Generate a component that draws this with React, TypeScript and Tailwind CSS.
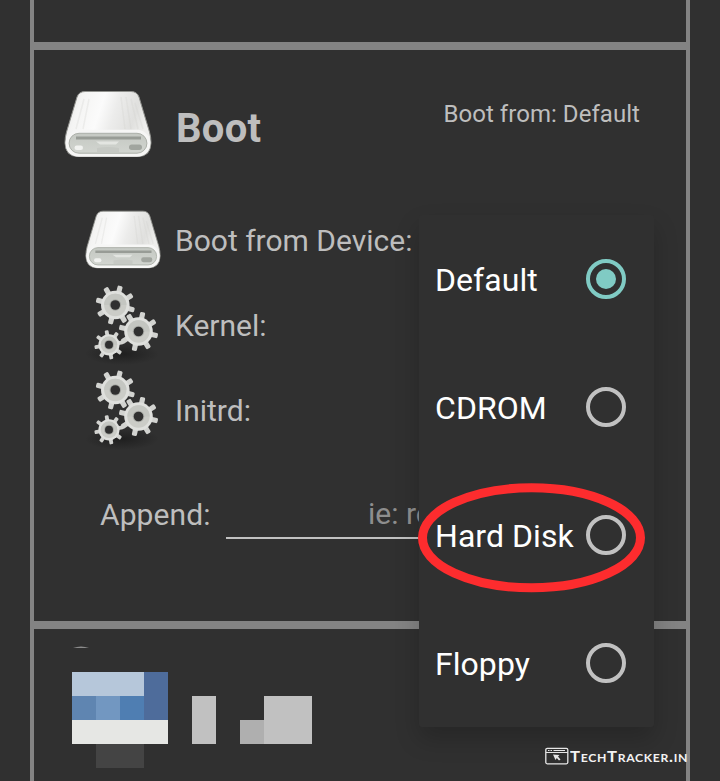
import React from 'react';

function Disk({ className, id }: { className: string; id: string }) {
  return (
    <svg className={className} viewBox="0 0 88 70" preserveAspectRatio="none">
      <defs>
        <linearGradient id={id + 'top'} x1="0" x2="1" y1="0" y2="0.25">
          <stop offset="0" stopColor="#dcdcda" />
          <stop offset="0.2" stopColor="#f4f4f3" />
          <stop offset="0.45" stopColor="#fbfbfb" />
          <stop offset="0.62" stopColor="#ececeb" />
          <stop offset="0.85" stopColor="#e0e0de" />
          <stop offset="1" stopColor="#eeeeec" />
        </linearGradient>
        <linearGradient id={id + 'front'} x1="0" x2="0" y1="0" y2="1">
          <stop offset="0" stopColor="#c3c7c1" />
          <stop offset="1" stopColor="#d3d6d1" />
        </linearGradient>
      </defs>
      <path
        d="M21 2.500H67Q73 2.500 75 8L85.500 43Q87 48 87 54Q86.500 67.500 74 67.500H14Q1.500 67.500 1 54Q1 48 2.500 43L13 8Q15 2.500 21 2.500Z"
        fill={`url(#${id}top)`}
        stroke="#90918d"
        strokeWidth="1"
      />
      <path d="M20 10L12 40M25 10L19 40M57 8L61 40M62 8L67 40M67 10L74 40M71 14L79 40" stroke="#cfcfcc" strokeWidth="1.500" opacity=".28" fill="none" />
      <rect x="3.300" y="42.500" width="81.400" height="23.500" rx="11.700" fill={`url(#${id}front)`} stroke="#f6f6f5" strokeWidth="3.400" />
      <rect x="5.100" y="44.300" width="77.800" height="19.900" rx="9.900" fill="none" stroke="#acb0a9" strokeWidth="1" />
      <path d="M12 49H77" stroke="#989c96" strokeWidth="3" />
      <path d="M32 52.500H55L52 55.500H36Z" fill="#e3e5e1" />
      <path d="M33 59Q44 57 55 59V63H33Z" fill="#c6c9c4" />
      <rect x="10.500" y="56.500" width="8.500" height="4.500" rx="2.200" fill="#f1f2f0" />
      <rect x="65" y="55.500" width="13" height="5.500" rx="2.700" fill="#a1a59f" />
    </svg>
  );
}

function Gear({ x, y, r, hole, turn }: { x: number; y: number; r: number; hole: number; turn: number }) {
  const teeth = [0, 45, 90, 135, 180, 225, 270, 315];
  const w = r * 0.36;
  return (
    <g transform={`translate(${x} ${y})`}>
      {teeth.map((a) => (
        <rect key={a} x={-w / 2} y={-r * 1.38} width={w} height={r * 0.6} rx={w * 0.28} transform={`rotate(${a + turn})`} fill="#d2d3d0" />
      ))}
      <circle r={r} fill="#dfe0dd" />
      <circle r={r * 0.78} fill="#cbccc7" />
      <path d={`M${-r * 0.78} 0A${r * 0.78} ${r * 0.78} 0 0 1 ${r * 0.78} 0`} fill="#c4c6c1" />
      <circle r={hole + 1} fill="#a9aba6" />
      <circle r={hole} fill="#303030" />
    </g>
  );
}

function Gears({ id }: { id: string }) {
  return (
    <svg className="h-[85px] w-[76px]" viewBox="85 283 76 85">
      <defs>
        <radialGradient id={id}>
          <stop offset="0" stopColor="#181818" stopOpacity=".7" />
          <stop offset="1" stopColor="#181818" stopOpacity="0" />
        </radialGradient>
      </defs>
      <ellipse cx="122" cy="354" rx="37" ry="11" fill={`url(#${id})`} />
      <Gear x={115.3} y={305} r={14.3} hole={4.8} turn={15} />
      <Gear x={109} y={344.8} r={10.6} hole={4} turn={-10} />
      <Gear x={138.500} y={331.500} r={14.3} hole={4.8} turn={13} />
    </svg>
  );
}

function Row({ icon, label }: { icon: React.ReactNode; label: string }) {
  return (
    <div className="flex h-[85px] items-center">
      <div className="flex h-full w-[90px] shrink-0 items-center">{icon}</div>
      <span className="text-[30px]">{label}</span>
    </div>
  );
}

const options = ['Default', 'CDROM', 'Hard Disk', 'Floppy'];

function Radio({ on }: { on: boolean }) {
  return (
    <span className={`flex size-10 items-center justify-center rounded-full border-4 ${on ? 'border-[#80cbc4]' : 'border-[#c1c1c1]'}`}>
      {on && <span className="size-5 rounded-full bg-[#80cbc4]" />}
    </span>
  );
}

function Menu() {
  return (
    <div className="absolute left-[419px] top-[215px] w-[235px] rounded-[3px] bg-[#303030] pl-4 pr-7 text-[32px] text-white shadow-[0_12px_24px_rgba(0,0,0,0.2)]">
      {options.map((o, i) => (
        <div key={o} className="flex h-32 items-center justify-between whitespace-nowrap">
          <span className="mt-[2px] tracking-[0.05px]">{o}</span>
          <Radio on={i === 0} />
        </div>
      ))}
    </div>
  );
}

function Mosaic() {
  return (
    <div className="ml-[38px] mt-[24px] grid grid-cols-[repeat(10,24px)] grid-rows-[repeat(4,24px)]">
      <div className="col-span-3 bg-[#b6c7da]" />
      <div className="col-start-4 row-span-2 bg-[#4e6c9b]" />
      <div className="col-start-1 row-start-2 bg-[#5f85b1]" />
      <div className="col-start-2 row-start-2 bg-[#7297c1]" />
      <div className="col-start-3 row-start-2 bg-[#4f7eb2]" />
      <div className="col-span-4 col-start-1 row-start-3 bg-[#e6e7e4]" />
      <div className="col-span-2 col-start-2 row-start-4 bg-[#444444]" />
      <div className="col-start-6 row-span-2 row-start-2 bg-[#c1c1c1]" />
      <div className="col-start-8 row-start-3 bg-[#afafaf]" />
      <div className="col-span-2 col-start-9 row-span-2 row-start-2 bg-[#c1c1c1]" />
    </div>
  );
}

function Watermark() {
  return (
    <div className="absolute left-[545px] top-[746px] flex h-[19px] items-center text-[#f2f2f2]">
      <svg className="h-[18px] w-6 shrink-0" viewBox="0 0 24 18" fill="none">
        <rect x=".8" y="1.300" width="22" height="15.500" rx="1.500" stroke="#e6e6e6" strokeWidth="1.300" />
        <path d="M1 5.500H23" stroke="#e6e6e6" />
        <path d="M3 3.500H4.500M5.500 3.500H7M8.500 3.500H20" stroke="#e6e6e6" strokeWidth="1.200" />
        <path d="M8 7.500L14.500 8L13 9.500L15.500 12.500L14 13.500L11.800 11L10.500 13Z" fill="#e6e6e6" />
      </svg>
      <span className="ml-px mt-px origin-left scale-x-[1.11] whitespace-nowrap font-['Lato',sans-serif] text-[15px] font-bold leading-none tracking-[0.600px] [font-variant-caps:small-caps]">TechTracker.in</span>
    </div>
  );
}

export default function App() {
  return (
    <div className="relative h-[781px] w-[720px] overflow-hidden bg-[#303030] pl-[30px] font-['Roboto',sans-serif] text-[#bebebe]">
      <div className="flex h-full w-[660px] flex-col border-x-4 border-[#838383]">
        <div className="h-[50px] shrink-0 border-b-8 border-[#838383]" />
        <section className="h-[579px] shrink-0 border-b-8 border-[#838383]">
          <header className="flex h-[148px] items-start pl-[30px] pr-[46px]">
            <Disk id="big" className="mt-[39px] h-[70px] w-[88px]" />
            <h2 className="ml-6 mt-[49px] text-[40px] font-bold leading-[60px] tracking-[0.300px]">Boot</h2>
            <span className="ml-auto mt-[49px] text-[24px] leading-[30px] tracking-[0.050px]">Boot from: Default</span>
          </header>
          <div className="pl-[51px]">
            <Row icon={<Disk id="small" className="-mt-[2px] h-[61px] w-[76px]" />} label="Boot from Device:" />
            <Row icon={<Gears id="k" />} label="Kernel:" />
            <Row icon={<Gears id="i" />} label="Initrd:" />
          </div>
          <div className="mt-[36px] flex h-[50px] items-start pl-[66px] text-[30px]">
            <span className="w-[126px] shrink-0 leading-[52px] tracking-[0.100px]">Append:</span>
            <span className="h-[50px] w-[420px] border-b-2 border-[#c1c1c1] pl-[142px] leading-[50px] text-[#8e8e8e]">ie: ro</span>
          </div>
        </section>
        <div>
          <svg className="ml-[38px] mt-[17px] h-[2px] w-[18px]" viewBox="0 0 18 2">
            <path d="M1 2Q9 -1 17 2Z" fill="#8b8b8b" />
          </svg>
          <Mosaic />
        </div>
      </div>
      <Menu />
      <svg className="absolute left-[410px] top-[475px] h-[125px] w-[245px]" viewBox="410 475 245 125" fill="none">
        <ellipse cx="531.500" cy="537.800" rx="109" ry="50" stroke="#fd2c2e" strokeWidth="9" />
      </svg>
      <Watermark />
    </div>
  );
}
